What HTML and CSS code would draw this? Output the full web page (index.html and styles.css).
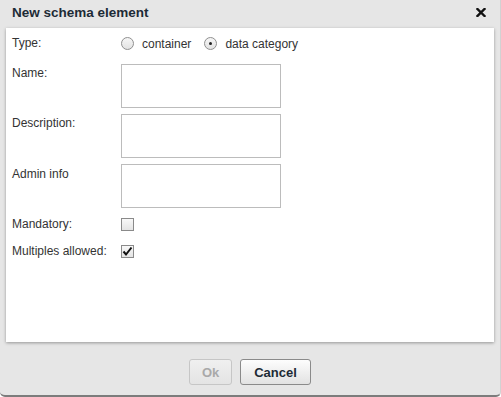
FILE: index.html
```html
<!DOCTYPE html>
<html lang="en">
<head>
    <meta charset="UTF-8">
    <meta name="viewport" content="width=device-width, initial-scale=1.0">
    <title>New schema element</title>
    <link rel="stylesheet" href="styles.css">
</head>
<body>

    <div class="dialog">
        <div class="titlebar">
            <span class="title">New schema element</span>
            <span class="close" title="Close">
                <svg width="10" height="9" viewBox="0 0 10 9">
                    <path d="M1.5 1 L8.5 8 M8.5 1 L1.5 8" stroke="#111" stroke-width="2.4" stroke-linecap="square"/>
                </svg>
            </span>
        </div>

        <div class="panel">
            <form class="form-grid">
                <label class="row-label">Type:</label>
                <div class="radios">
                    <span class="radio"></span>
                    <span class="radio-text">container</span>
                    <span class="radio checked"></span>
                    <span class="radio-text">data category</span>
                </div>

                <label class="row-label">Name:</label>
                <textarea class="field"></textarea>

                <label class="row-label">Description:</label>
                <textarea class="field"></textarea>

                <label class="row-label">Admin info</label>
                <textarea class="field"></textarea>

                <label class="row-label check-label">Mandatory:</label>
                <div class="check-cell"><span class="checkbox"></span></div>

                <label class="row-label check-label">Multiples allowed:</label>
                <div class="check-cell">
                    <span class="checkbox">
                        <svg width="11" height="11" viewBox="0 0 11 11">
                            <path d="M1.5 5.5 L4 8.5 L9.5 1.5" fill="none" stroke="#111" stroke-width="2"/>
                        </svg>
                    </span>
                </div>
            </form>
        </div>

        <div class="footer">
            <button class="btn disabled" type="button">Ok</button>
            <button class="btn" type="button">Cancel</button>
        </div>
    </div>

</body>
</html>
```

FILE: styles.css
```css
body {
    margin: 0;
    font-family: "Liberation Sans", Arial, sans-serif;
    background-color: #ffffff;
}
.dialog {
    width: 500px;
    height: 395px;
    background-color: #e6e6e6;
    border-right: 1px solid #d2d2d2;
    border-bottom: 2px solid #7c7c7c;
    border-radius: 0 0 5px 5px;
    display: flex;
    flex-direction: column;
}
.titlebar {
    height: 28px;
    display: flex;
    justify-content: space-between;
    align-items: center;
    padding: 0 14px 0 12px;
    box-sizing: border-box;
}
.title {
    font-size: 13.5px;
    font-weight: bold;
    color: #1d2b36;
    margin-top: -3px;
}
.close {
    display: flex;
    margin-top: -3px;
}
.panel {
    margin: 0 6px;
    height: 314px;
    background-color: white;
    box-shadow: 0 1px 3px rgba(0, 0, 0, 0.35);
    padding: 7px 0 0 6px;
    box-sizing: border-box;
}
.form-grid {
    display: grid;
    grid-template-columns: 109px auto;
    grid-template-rows: 23px 44px 44px 44px 20px 22px;
    row-gap: 6px;
    font-size: 12px;
    color: #333;
}
.row-label {
    line-height: 14px;
    padding-top: 2px;
}
.form-grid .row-label:nth-of-type(1) {
    padding-top: 1px;
}
.form-grid .row-label:nth-of-type(4) {
    padding-top: 3px;
}
.check-label {
    align-self: center;
    padding-top: 0;
}
.radios {
    display: flex;
    align-items: center;
    height: 17px;
}
.radio {
    width: 11px;
    height: 11px;
    border: 1px solid #8f8f8f;
    border-radius: 50%;
    background: linear-gradient(#f6f6f6, #e2e2e2);
    display: flex;
    align-items: center;
    justify-content: center;
}
.radio.checked::after {
    content: "";
    width: 3px;
    height: 3px;
    border-radius: 50%;
    background-color: #222;
}
.radio-text {
    margin: 0 13px 0 8px;
    color: #333;
}
.field {
    width: 160px;
    height: 44px;
    border: 1px solid #bcbcbc;
    box-sizing: border-box;
    resize: none;
    margin: 0;
    padding: 2px;
}
.check-cell {
    display: flex;
    align-items: center;
}
.checkbox {
    width: 11px;
    height: 11px;
    border: 1px solid #8a8a8a;
    background: linear-gradient(#f8f8f8, #e4e4e4);
    display: flex;
    align-items: center;
    justify-content: center;
}
.footer {
    display: flex;
    justify-content: center;
    gap: 8px;
    padding-top: 17px;
}
.btn {
    height: 26px;
    padding: 0 12px;
    border: 1px solid #8a8a8a;
    border-radius: 3px;
    background: linear-gradient(#fdfdfd, #e2e2e2);
    font-family: "Liberation Sans", Arial, sans-serif;
    font-size: 13px;
    font-weight: bold;
    color: #1d2b36;
}
.btn.disabled {
    width: 43px;
    border-color: #c6c6c6;
    color: #a9a9a9;
    background: linear-gradient(#f0f0f0, #e4e4e4);
}
.btn:not(.disabled) {
    width: 71px;
}
```
